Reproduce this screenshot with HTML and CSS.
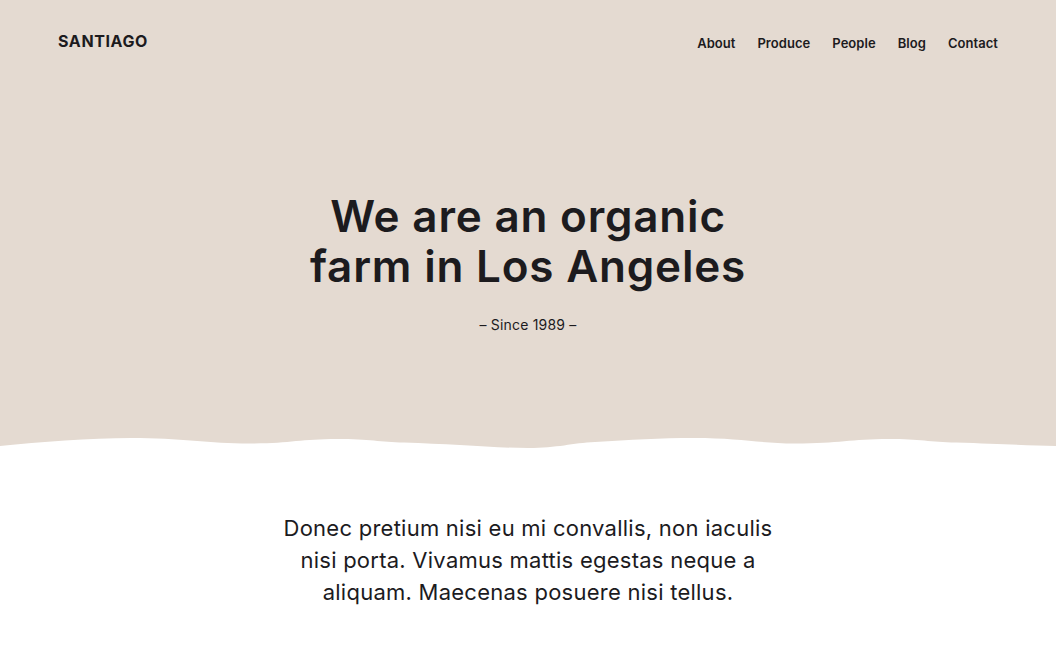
FILE: index.html
```html
<!DOCTYPE html>
<html lang="en">
<head>
<meta charset="utf-8">
<title>Santiago</title>
<link rel="stylesheet" href="styles.css">
</head>
<body>
<section class="hero">
  <header class="site-header">
    <a class="logo" href="#">SANTIAGO</a>
    <nav class="nav">
      <a href="#">About</a>
      <a href="#">Produce</a>
      <a href="#">People</a>
      <a href="#">Blog</a>
      <a href="#">Contact</a>
    </nav>
  </header>
  <div class="hero-content">
    <h1 class="hero-title">We are an organic<br>farm in Los Angeles</h1>
    <p class="hero-sub">– Since 1989 –</p>
  </div>
</section>
<svg class="wave" viewBox="0 0 1056 12" preserveAspectRatio="none" aria-hidden="true">
  <path d="M0 10 C40 6 90 2 131 2 C180 2 210 7.5 249 7.5 C290 7.5 300 3 337 3 C370 3 380 6 404 6.6 C450 8 495 12 528 12 C558 12 572 7 595 6 C630 4 660 2 694 2 C740 2 760 7.5 795 7.5 C840 7.5 850 3 889 3 C920 3 930 6 956 6.6 C1000 8 1030 9.5 1056 10 V0 H0 Z" fill="#e4dad1"/>
</svg>
<section class="intro">
  <p class="intro-text">Donec pretium nisi eu mi convallis, non iaculis nisi porta. Vivamus mattis egestas neque a aliquam. Maecenas posuere nisi tellus.</p>
</section>
</body>
</html>
```

FILE: styles.css
```css
* { box-sizing: border-box; }
html, body { margin: 0; padding: 0; }
body {
  font-family: "Inter", "Noto Sans", sans-serif;
  color: #1c1b1e;
  background: #ffffff;
}
a { color: inherit; text-decoration: none; }

.hero {
  background: #e4dad1;
  height: 436px;
  display: flex;
  flex-direction: column;
}
.site-header {
  display: flex;
  justify-content: space-between;
  align-items: flex-start;
  padding: 30px 58px 0 58px;
  height: 84px;
}
.logo {
  font-weight: 700;
  font-size: 16px;
  letter-spacing: 0.6px;
  line-height: 22px;
}
.nav {
  display: flex;
  gap: 22px;
  padding-top: 2px;
}
.nav a {
  font-size: 13px;
  font-weight: 600;
  line-height: 22px;
  letter-spacing: 0.05px;
}
.hero-content {
  text-align: center;
  padding-top: 107px;
}
.hero-title {
  margin: 0;
  font-size: 44px;
  font-weight: 600;
  line-height: 50px;
  letter-spacing: 0.8px;
}
.hero-sub {
  margin: 24px 0 0;
  font-size: 14px;
  line-height: 20px;
  letter-spacing: 0.2px;
}
.wave {
  display: block;
  width: 100%;
  height: 12px;
}
.intro {
  padding: 64px 0 40px;
  display: flex;
  justify-content: center;
}
.intro-text {
  margin: 0;
  max-width: 510px;
  text-align: center;
  font-size: 22px;
  line-height: 32px;
  letter-spacing: 0.25px;
}
```
